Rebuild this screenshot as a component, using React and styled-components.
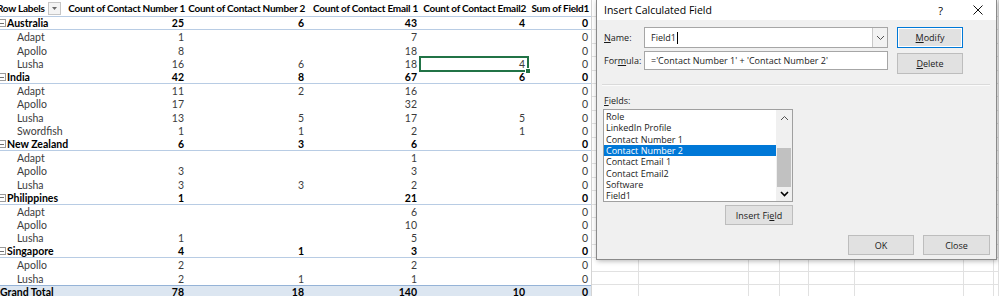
import React from 'react';
import styled, { createGlobalStyle } from 'styled-components';

const GlobalStyle = createGlobalStyle`
  html, body {
    margin: 0;
    padding: 0;
    background: #fff;
    overflow: hidden;
  }
`;

const PIVOT_COLS = '64px 123px 120px 113px 108px 63px';
const SHEET_COLS = '47px 110px 31px 29px 46px 109px 30px 1fr';

const Page = styled.div`
  position: relative;
  display: flex;
  width: 999px;
  height: 296px;
  overflow: hidden;
  background: #fff;
`;

const Pivot = styled.div`
  display: flex;
  flex-direction: column;
  width: 592px;
  flex: none;
  border-right: 1px solid #d4d4d4;
  box-sizing: border-box;
  font-family: Lato, 'Liberation Sans', sans-serif;
  font-size: 10.5px;
`;

const Row = styled.div`
  display: grid;
  grid-template-columns: ${PIVOT_COLS};
  height: ${p => p.$h}px;
  flex: none;
  box-sizing: border-box;
  font-weight: ${p => (p.$bold ? 700 : 400)};
  color: ${p => (p.$bold ? '#000' : '#3c3c3c')};
  background: ${p => (p.$total ? '#dce6f1' : '#fff')};
  border-top: ${p => (p.$total ? '1px solid #95b3d7' : 'none')};
  border-bottom: ${p => (p.$line ? '1px solid #b8cce4' : 'none')};
`;

const Cell = styled.div`
  position: relative;
  display: flex;
  align-items: center;
  justify-content: ${p => (p.$left ? 'flex-start' : 'flex-end')};
  padding: 0 3px 0 ${p => p.$indent || 0}px;
  white-space: nowrap;
  box-sizing: border-box;
  min-width: 0;
  outline: ${p => (p.$selected ? '2px solid #217346' : 'none')};
  outline-offset: -1px;
`;

const HeaderCell = styled(Cell)`
  font-size: 10px;
  letter-spacing: -0.25px;
  padding-right: 2px;
`;

const FillHandle = styled.span`
  position: absolute;
  right: -3px;
  bottom: -3px;
  width: 4px;
  height: 4px;
  background: #217346;
  border: 1px solid #fff;
`;

const FilterButton = styled.span`
  margin-left: auto;
  margin-right: 1px;
  width: 11px;
  height: 11px;
  border: 1px solid #c6c6c6;
  background: #f4f4f4;
  display: flex;
  align-items: center;
  justify-content: center;
  flex: none;
`;

const CollapseBox = styled.span`
  position: relative;
  width: 6px;
  height: 6px;
  margin: 0 1px 0 -2px;
  border: 1px solid #9a9a9a;
  flex: none;

  &::after {
    content: '';
    position: absolute;
    left: 1px;
    right: 1px;
    top: 2.5px;
    height: 1px;
    background: #707070;
  }
`;

const Sheet = styled.div`
  flex: 1;
  display: flex;
  flex-direction: column;
`;

const SheetRow = styled.div`
  display: grid;
  grid-template-columns: ${SHEET_COLS};
  height: ${p => p.$h}px;
  flex: none;
  box-sizing: border-box;
  border-bottom: 1px solid #e1e1e1;
`;

const SheetCell = styled.div`
  border-right: 1px solid #e1e1e1;
`;

/* ---------- dialog ---------- */

const Dialog = styled.div`
  position: absolute;
  left: 596px;
  top: 0;
  width: 401px;
  height: 260px;
  box-sizing: border-box;
  border: 1px solid #8a8a8a;
  border-top: none;
  background: #f0f0f0;
  box-shadow: 1px 1px 5px rgba(0, 0, 0, 0.3);
  display: flex;
  flex-direction: column;
  font-family: 'Open Sans', 'Noto Sans', sans-serif;
  font-size: 9px;
  color: #000;
`;

const TitleBar = styled.div`
  height: 20px;
  flex: none;
  background: #fff;
  display: flex;
  align-items: center;
  padding-left: 7px;
  font-size: 10.5px;
`;

const Title = styled.div`
  flex: 1;
`;

const TitleButton = styled.div`
  width: 37px;
  height: 20px;
  display: flex;
  align-items: center;
  justify-content: center;
  font-size: 11px;
`;

const Body = styled.div`
  flex: 1;
  display: flex;
  flex-direction: column;
  padding: 7px 6px 6px 7px;
`;

const TopSection = styled.div`
  display: flex;
  gap: 9px;
`;

const FormCol = styled.div`
  display: flex;
  flex-direction: column;
  gap: 3px;
`;

const FormRow = styled.div`
  display: flex;
  align-items: center;
`;

const Label = styled.label`
  width: 40px;
  flex: none;
  color: #1a1a1a;
`;

const TextBox = styled.div`
  width: 244px;
  height: ${p => p.$h}px;
  box-sizing: border-box;
  border: 1px solid #a6a6a6;
  background: #fff;
  display: flex;
  align-items: center;
  padding-left: 6px;
  color: #222;
`;

const Caret = styled.span`
  width: 1px;
  height: 12px;
  background: #000;
  margin-left: 1px;
`;

const ComboArrow = styled.span`
  margin-left: auto;
  width: 14px;
  height: 100%;
  border-left: 1px solid #c8c8c8;
  background: #f2f2f2;
  display: flex;
  align-items: center;
  justify-content: center;
`;

const ButtonCol = styled.div`
  display: flex;
  flex-direction: column;
  gap: 5px;
`;

const Button = styled.div`
  width: ${p => p.$w}px;
  height: ${p => p.$h || 20}px;
  box-sizing: border-box;
  border: 1px solid ${p => (p.$default ? '#0078d7' : '#bdbdbd')};
  box-shadow: ${p => (p.$default ? 'inset 0 0 0 1px #fff' : 'none')};
  background: #e1e1e1;
  display: flex;
  align-items: center;
  justify-content: center;
  color: #1a1a1a;
  flex: none;
`;

const Separator = styled.div`
  margin: 10px 0 0 -2px;
  height: 1px;
  background: #dadada;
  border-bottom: 1px solid #fbfbfb;
`;

const FieldsLabel = styled.div`
  margin-top: 8px;
  height: 13px;
  display: flex;
  align-items: center;
  color: #1a1a1a;
`;

const FieldsSection = styled.div`
  width: 190px;
  margin-left: -1px;
  display: flex;
  flex-direction: column;
  align-items: flex-end;
`;

const ListBox = styled.div`
  margin-top: 2px;
  width: 190px;
  height: 93px;
  box-sizing: border-box;
  border: 1px solid #a0a0a0;
  background: #fff;
  display: flex;
`;

const Items = styled.div`
  flex: 1;
  padding-top: 1px;
`;

const Item = styled.div`
  height: 11.3px;
  display: flex;
  align-items: center;
  padding-left: 2px;
  background: ${p => (p.$selected ? '#0078d7' : 'transparent')};
  color: ${p => (p.$selected ? '#fff' : '#1a1a1a')};
  white-space: nowrap;
`;

const ScrollBar = styled.div`
  width: 16px;
  flex: none;
  background: #f0f0f0;
  display: flex;
  flex-direction: column;
`;

const ScrollArrow = styled.div`
  height: ${p => p.$h}px;
  flex: none;
  display: flex;
  align-items: center;
  justify-content: center;
`;

const Track = styled.div`
  flex: 1;
  display: flex;
  flex-direction: column;
  justify-content: flex-end;
`;

const Thumb = styled.div`
  height: 39px;
  margin: 0 1px;
  background: #c1c1c1;
`;

const InsertRow = styled.div`
  margin-top: 3px;
`;

const FooterRow = styled.div`
  margin-top: 10px;
  display: flex;
  justify-content: flex-end;
  gap: 9px;
`;

const Chevron = ({ up, bold }) => (
  <svg width="9" height="6" viewBox="0 0 9 6">
    <polyline
      points={up ? '1,5 4.5,1.5 8,5' : '1,1 4.5,4.5 8,1'}
      fill="none"
      stroke={bold ? '#000' : '#505050'}
      strokeWidth={bold ? 1.6 : 1}
    />
  </svg>
);

const groups = [
  { name: 'Australia', total: [25, 6, 43, 4, 0], items: [
    ['Adapt', [1, '', 7, '', 0]],
    ['Apollo', [8, '', 18, '', 0]],
    ['Lusha', [16, 6, 18, 4, 0], 3],
  ] },
  { name: 'India', total: [42, 8, 67, 6, 0], items: [
    ['Adapt', [11, 2, 16, '', 0]],
    ['Apollo', [17, '', 32, '', 0]],
    ['Lusha', [13, 5, 17, 5, 0]],
    ['Swordfish', [1, 1, 2, 1, 0]],
  ] },
  { name: 'New Zealand', total: [6, 3, 6, '', 0], items: [
    ['Adapt', ['', '', 1, '', 0]],
    ['Apollo', [3, '', 3, '', 0]],
    ['Lusha', [3, 3, 2, '', 0]],
  ] },
  { name: 'Philippines', total: [1, '', 21, '', 0], items: [
    ['Adapt', ['', '', 6, '', 0]],
    ['Apollo', ['', '', 10, '', 0]],
    ['Lusha', [1, '', 5, '', 0]],
  ] },
  { name: 'Singapore', total: [4, 1, 3, '', 0], items: [
    ['Apollo', [2, '', 2, '', 0]],
    ['Lusha', [2, 1, 1, '', 0]],
  ] },
];

const headers = [
  'Count of Contact Number 1',
  'Count of Contact Number 2',
  'Count of Contact Email 1',
  'Count of Contact Email2',
  'Sum of Field1',
];

const fields = [
  'Role',
  'LinkedIn Profile',
  'Contact Number 1',
  'Contact Number 2',
  'Contact Email 1',
  'Contact Email2',
  'Software',
  'Field1',
];

const HEADER_H = 17;
const ROW_H = 13.4;

// flatten the pivot into rows
const rows = [];
groups.forEach(g => {
  rows.push({ kind: 'group', label: g.name, values: g.total });
  g.items.forEach(([label, values, sel]) => rows.push({ kind: 'item', label, values, sel }));
});
rows.push({ kind: 'total', label: 'Grand Total', values: [78, 18, 140, 10, 0] });

const rowHeight = i =>
  Math.round(HEADER_H + (i + 1) * ROW_H) - Math.round(HEADER_H + i * ROW_H);

const PivotTable = () => (
  <Pivot>
    <Row $h={HEADER_H} $bold $line>
      <HeaderCell $left style={{ marginLeft: -3 }}>
        Row Labels
        <FilterButton>
          <svg width="5" height="3" viewBox="0 0 5 3">
            <polygon points="0,0 5,0 2.5,3" fill="#6a6a6a" />
          </svg>
        </FilterButton>
      </HeaderCell>
      {headers.map(h => (
        <HeaderCell key={h}>{h}</HeaderCell>
      ))}
    </Row>
    {rows.map((r, i) => (
      <Row
        key={i}
        $h={rowHeight(i)}
        $bold={r.kind !== 'item'}
        $line={r.kind === 'group'}
        $total={r.kind === 'total'}
      >
        <Cell $left $indent={r.kind === 'item' ? 17 : 0}>
          {r.kind === 'group' && <CollapseBox />}
          {r.label}
        </Cell>
        {r.values.map((v, j) => (
          <Cell key={j} $selected={r.sel === j}>
            {v}
            {r.sel === j && <FillHandle />}
          </Cell>
        ))}
      </Row>
    ))}
  </Pivot>
);

const SheetArea = () => (
  <Sheet>
    {[HEADER_H, ...rows.map((_, i) => rowHeight(i))].map((h, i) => (
      <SheetRow key={i} $h={h}>
        {Array.from({ length: 8 }, (_, j) => (
          <SheetCell key={j} />
        ))}
      </SheetRow>
    ))}
  </Sheet>
);

const CalculatedFieldDialog = () => (
  <Dialog>
    <TitleBar>
      <Title>Insert Calculated Field</Title>
      <TitleButton>?</TitleButton>
      <TitleButton>
        <svg width="10" height="10" viewBox="0 0 10 10">
          <path d="M0.5 0.5 L9.5 9.5 M9.5 0.5 L0.5 9.5" stroke="#111" strokeWidth="1" />
        </svg>
      </TitleButton>
    </TitleBar>
    <Body>
      <TopSection>
        <FormCol>
          <FormRow>
            <Label><u>N</u>ame:</Label>
            <TextBox $h={21}>
              Field1
              <Caret />
              <ComboArrow>
                <Chevron />
              </ComboArrow>
            </TextBox>
          </FormRow>
          <FormRow>
            <Label>For<u>m</u>ula:</Label>
            <TextBox $h={19}>='Contact Number 1' + 'Contact Number 2'</TextBox>
          </FormRow>
        </FormCol>
        <ButtonCol>
          <Button $w={66} $h={21} $default><span><u>M</u>odify</span></Button>
          <Button $w={66} $h={21}><span><u>D</u>elete</span></Button>
        </ButtonCol>
      </TopSection>
      <Separator />
      <FieldsLabel><span><u>F</u>ields:</span></FieldsLabel>
      <FieldsSection>
        <ListBox>
          <Items>
            {fields.map(f => (
              <Item key={f} $selected={f === 'Contact Number 2'}>{f}</Item>
            ))}
          </Items>
          <ScrollBar>
            <ScrollArrow $h={16}><Chevron up /></ScrollArrow>
            <Track><Thumb /></Track>
            <ScrollArrow $h={14}><Chevron bold /></ScrollArrow>
          </ScrollBar>
        </ListBox>
        <InsertRow>
          <Button $w={68}><span>Insert Fi<u>e</u>ld</span></Button>
        </InsertRow>
      </FieldsSection>
      <FooterRow>
        <Button $w={66}>OK</Button>
        <Button $w={67}>Close</Button>
      </FooterRow>
    </Body>
  </Dialog>
);

const App = () => (
  <>
    <GlobalStyle />
    <Page>
      <PivotTable />
      <SheetArea />
      <CalculatedFieldDialog />
    </Page>
  </>
);

export default App;
